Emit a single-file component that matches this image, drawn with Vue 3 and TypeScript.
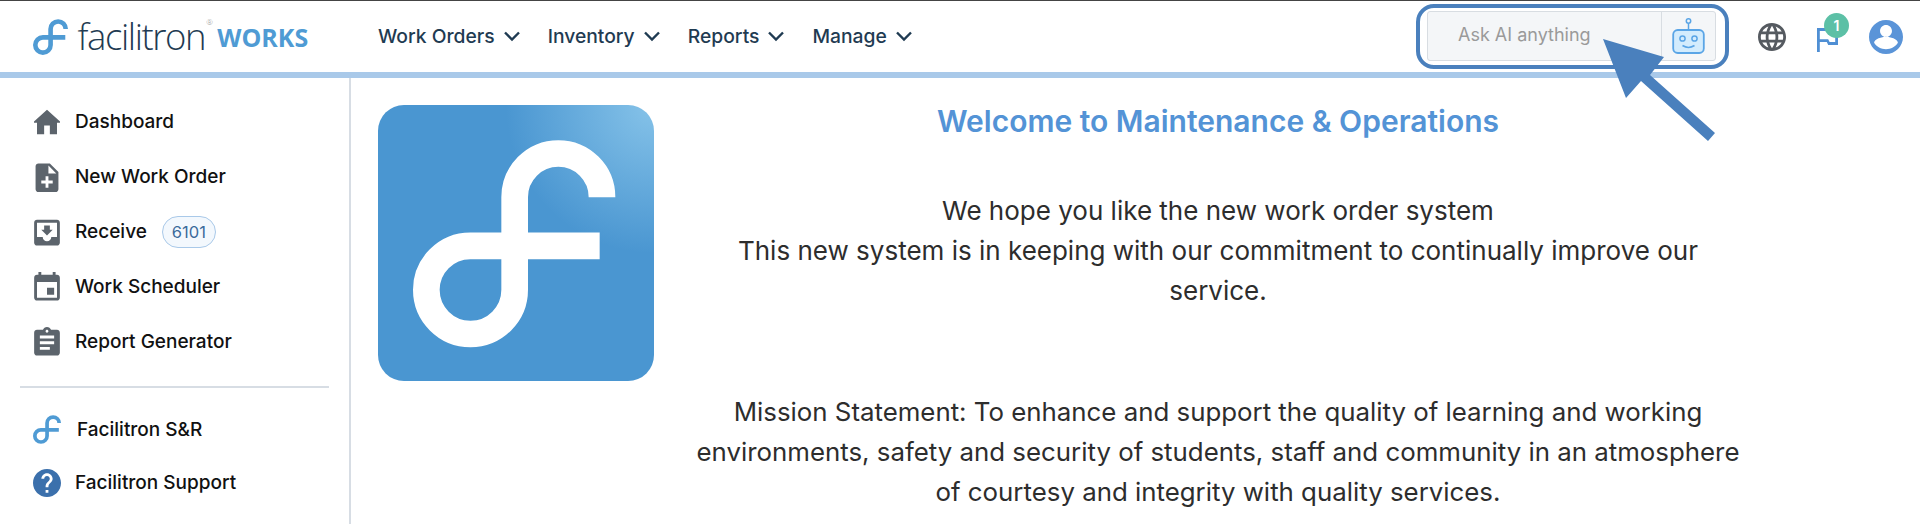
<script setup lang="ts">
const logoPath = 'M727 320A131 131 0 0 0 465 320V598A132 132 0 0 1 200 598A132 132 0 0 1 332 466H720'
const navItems: string[] = ['Work Orders', 'Inventory', 'Reports', 'Manage']
interface SideItem { label: string; path: string; badge?: string }
const sideItems: SideItem[] = [
  { label: 'Dashboard', path: 'M10 20v-6h4v6h5v-8h3L12 3 2 12h3v8z' },
  { label: 'New Work Order', path: 'M14 2H6c-1.1 0-2 .9-2 2v16c0 1.1.9 2 2 2h12c1.1 0 2-.9 2-2V8l-6-6zm2 14h-3v3h-2v-3H8v-2h3v-3h2v3h3v2zm-3-7V3.5L18.5 9H13z' },
  { label: 'Receive', badge: '6101', path: 'M19 3H5c-1.1 0-2 .9-2 2v14c0 1.1.9 2 2 2h14c1.1 0 2-.9 2-2V5c0-1.1-.9-2-2-2zm0 12h-4c0 1.66-1.34 3-3 3s-3-1.34-3-3H5V5h14v10zM16 10h-2V7h-4v3H8l4 4 4-4z' },
  { label: 'Work Scheduler', path: 'M17 12h-5v5h5v-5zM16 1v2H8V1H6v2H5c-1.11 0-1.99.9-1.99 2L3 19c0 1.1.89 2 2 2h14c1.1 0 2-.9 2-2V5c0-1.1-.9-2-2-2h-1V1h-2zm3 18H5V8h14v11z' },
  { label: 'Report Generator', path: 'M19 3h-4.18C14.4 1.84 13.3 1 12 1c-1.3 0-2.4.84-2.82 2H5c-1.1 0-2 .9-2 2v14c0 1.1.9 2 2 2h14c1.1 0 2-.9 2-2V5c0-1.1-.9-2-2-2zm-7 0c.55 0 1 .45 1 1s-.45 1-1 1-1-.45-1-1 .45-1 1-1zm2 14H7v-2h7v2zm3-4H7v-2h10v2zm0-4H7V7h10v2z' },
]
</script>

<template>
  <div class="page">
    <header class="topbar">
      <div class="brand">
        <svg class="brand-mark" viewBox="160 148 607 622"><path :d="logoPath" class="f-stroke" /></svg>
        <span class="brand-name">facilitron<sup class="reg">®</sup></span>
        <span class="brand-works">WORKS</span>
      </div>
      <nav class="nav">
        <a v-for="item in navItems" :key="item" class="nav-item">
          {{ item }}
          <svg class="chev" viewBox="0 0 18 12"><path d="M2 2.5l7 7 7-7" /></svg>
        </a>
      </nav>
      <div class="tools">
        <div class="ask-frame">
          <div class="ask">
            <span class="ask-text">Ask AI anything</span>
            <span class="ask-bot">
              <svg class="bot" viewBox="0 0 33 36">
                <circle cx="16.500" cy="3" r="2.200" class="bot-line" />
                <path d="M16.500 5.500V12" class="bot-line" />
                <rect x="1.200" y="12" width="30.600" height="23" rx="4.500" class="bot-body" />
                <circle cx="10.500" cy="20.500" r="2.600" class="bot-line" />
                <circle cx="22.500" cy="20.500" r="2.600" class="bot-line" />
                <path d="M10.500 27.500q6 3.800 12 0" class="bot-line" />
              </svg>
            </span>
          </div>
        </div>
        <svg class="globe" viewBox="2 2 20 20"><path d="M11.990 2C6.470 2 2 6.480 2 12s4.470 10 9.990 10C17.520 22 22 17.520 22 12S17.520 2 11.990 2zm6.930 6h-2.950c-.32-1.250-.78-2.450-1.380-3.560 1.840.63 3.370 1.910 4.330 3.560zM12 4.040c.83 1.200 1.480 2.530 1.910 3.960h-3.820c.43-1.430 1.080-2.760 1.910-3.960zM4.260 14C4.100 13.360 4 12.690 4 12s.1-1.360.26-2h3.380c-.08.66-.14 1.320-.14 2 0 .68.06 1.340.14 2H4.260zm.82 2h2.950c.32 1.250.78 2.450 1.380 3.560-1.840-.63-3.370-1.900-4.330-3.560zm2.950-8H5.080c.96-1.660 2.490-2.930 4.330-3.560C8.810 5.550 8.350 6.750 8.030 8zM12 19.960c-.83-1.200-1.480-2.530-1.910-3.960h3.820c-.43 1.430-1.080 2.760-1.910 3.960zM14.340 14H9.660c-.09-.66-.16-1.320-.16-2 0-.68.07-1.350.16-2h4.680c.09.65.16 1.320.16 2 0 .68-.07 1.340-.16 2zm.25 5.560c.6-1.110 1.060-2.310 1.380-3.560h2.950c-.96 1.650-2.490 2.930-4.330 3.560zM16.360 14c.08-.66.14-1.320.14-2 0-.68-.06-1.340-.14-2h3.380c.16.64.26 1.310.26 2s-.1 1.360-.26 2h-3.380z" /></svg>
        <span class="flag-wrap">
          <svg class="flag" viewBox="5 4 15 17"><path d="M14 6l-1-2H5v17h2v-7h5l1 2h7V6h-6zm4 8h-4l-1-2H7V6h5l1 2h5v6z" /></svg>
          <span class="flag-badge">1</span>
        </span>
        <svg class="user" viewBox="2 2 20 20"><path d="M12 2C6.480 2 2 6.480 2 12s4.480 10 10 10 10-4.480 10-10S17.520 2 12 2zm0 3c1.930 0 3.500 1.570 3.500 3.500S13.930 12 12 12s-3.500-1.570-3.500-3.500S10.070 5 12 5zm0 14.200c-2.920 0-5.490-1.500-7-3.770.03-2.320 4.670-3.600 7-3.600s6.970 1.280 7 3.600c-1.510 2.270-4.080 3.770-7 3.770z" /></svg>
      </div>
    </header>

    <div class="body">
      <aside class="side">
        <a v-for="item in sideItems" :key="item.label" class="side-item">
          <svg class="side-icon" viewBox="3 1 18 21"><path :d="item.path" /></svg>
          <span>{{ item.label }}</span>
          <span v-if="item.badge" class="count">{{ item.badge }}</span>
        </a>
        <hr class="rule" />
        <a class="side-item tight first">
          <svg class="side-f" viewBox="160 148 607 622"><path :d="logoPath" class="f-stroke" /></svg>
          <span>Facilitron S&amp;R</span>
        </a>
        <a class="side-item tight">
          <svg class="side-help" viewBox="2 2 20 20"><path d="M12 2C6.480 2 2 6.480 2 12s4.480 10 10 10 10-4.480 10-10S17.520 2 12 2zm1 17h-2v-2h2v2zm2.070-7.750l-.9.92C13.450 12.900 13 13.500 13 15h-2v-.5c0-1.100.45-2.100 1.170-2.830l1.240-1.260c.37-.36.59-.86.59-1.410 0-1.100-.9-2-2-2s-2 .9-2 2H8c0-2.210 1.790-4 4-4s4 1.790 4 4c0 .88-.36 1.680-.93 2.250z" /></svg>
          <span>Facilitron Support</span>
        </a>
      </aside>

      <main class="main">
        <div class="tile">
          <svg class="tile-mark" viewBox="55 45 828 825"><path :d="logoPath" class="tile-stroke" /></svg>
        </div>
        <section class="copy">
          <h1 class="title">Welcome to Maintenance &amp; Operations</h1>
          <p class="para">We hope you like the new work order system<br />This new system is in keeping with our commitment to continually improve our service.</p>
          <p class="para mission">Mission Statement: To enhance and support the quality of learning and working environments, safety and security of students, staff and community in an atmosphere of courtesy and integrity with quality services.</p>
        </section>
      </main>
    </div>

    <svg class="pointer" viewBox="0 0 130 110"><path d="M3 3L64 21L50 39L115 97L108 105L41 45L26 62z" /></svg>
  </div>
</template>

<style>
html, body { margin: 0; background: #fff; }
</style>

<style scoped>
.page {
  position: relative;
  width: 1920px;
  height: 524px;
  overflow: hidden;
  background: #fff;
  font-family: Inter, "Liberation Sans", sans-serif;
  box-sizing: border-box;
  border-top: 1px solid #444;
}
.topbar {
  display: flex;
  align-items: center;
  height: 71px;
  border-bottom: 6px solid #a9c9e9;
  box-sizing: content-box;
}
.brand { display: flex; align-items: center; width: 378px; padding-left: 33px; box-sizing: border-box; }
.brand-mark { width: 35px; height: 36px; margin-top: 1px; }
.f-stroke { fill: none; stroke: #4f9bd4; stroke-width: 80; }
.brand-name {
  margin-left: 9.500px;
  font: 300 36.500px/1 "Open Sans", sans-serif;
  letter-spacing: -1.400px;
  color: #1f3b52;
  position: relative;
}
.reg { position: absolute; top: 0; margin-left: 1px; font-size: 8px; line-height: 1; color: #999; letter-spacing: 0; }
.brand-works { margin-left: 12px; font: 700 25px/1 "Open Sans", sans-serif; color: #4f9bd4; margin-top: 2px; }
.nav { display: flex; gap: 27px; margin-top: -2px; }
.nav-item {
  display: flex;
  align-items: center;
  gap: 8px;
  font-size: 19.300px;
  font-weight: 500;
  color: #1f3b52;
}
.chev { width: 18px; height: 12px; }
.chev path { fill: none; stroke: #1f3b52; stroke-width: 2.400; }
.tools { display: flex; align-items: center; margin-left: auto; padding-right: 17px; }
.ask-frame {
  width: 313px;
  height: 65px;
  margin-top: -1px;
  box-sizing: border-box;
  border: 4px solid #4a80bd;
  border-radius: 18px;
  padding: 3px 9px 4px 7px;
  display: flex;
}
.ask {
  flex: 1;
  display: flex;
  background: #f4f6f8;
  border: 1.500px solid #d8dde2;
  border-radius: 3px;
}
.ask-text { flex: 1; display: flex; align-items: center; padding-left: 30px; padding-bottom: 2px; font-size: 18px; color: #9a9a9a; border-right: 1.500px solid #d8dde2; }
.ask-bot { width: 53px; display: flex; align-items: center; justify-content: center; }
.bot { width: 33px; height: 36px; }
.bot-line { fill: none; stroke: #5aa5e6; stroke-width: 1.500; }
.bot-body { fill: #d3ecfd; stroke: #5aa5e6; stroke-width: 1.800; }
.globe { width: 28px; height: 28px; margin-left: 29px; fill: #555a60; }
.flag-wrap { position: relative; display: flex; margin-left: 31px; }
.flag { width: 21px; height: 24px; fill: #4f8fd4; margin-top: 6px; }
.flag-badge {
  position: absolute;
  left: 7px;
  top: -9px;
  width: 25px;
  height: 25px;
  border-radius: 50%;
  background: #5cc0a6;
  color: #fff;
  font-size: 14px;
  font-weight: 600;
  display: flex;
  align-items: center;
  justify-content: center;
}
.user { width: 34px; height: 34px; margin-left: 31px; fill: #5a94d8; }
.body { display: flex; height: 447px; }
.side {
  width: 351px;
  flex: none;
  box-sizing: border-box;
  border-right: 2px solid #d7dde4;
  padding: 16px 20px 0;
}
.side-item {
  display: flex;
  align-items: center;
  height: 55px;
  font-size: 19px;
  font-weight: 500;
  color: #111;
}
.side-icon { width: 26px; height: 30px; margin-left: 14px; margin-right: 15px; fill: #5c646c; }
.count {
  margin-left: 15px;
  padding: 0 9px;
  height: 30px;
  border: 1.500px solid #a9c9e9;
  background: #f3f8fd;
  border-radius: 16px;
  font-size: 16.500px;
  font-weight: 400;
  color: #3c6b9c;
  display: flex;
  align-items: center;
}
.rule { border: none; border-top: 2px solid #d7dde4; margin: 17px 0 15px; width: 309px; }
.tight { height: 53px; }
.first { margin-bottom: 0; }
.side-f { width: 28px; height: 29px; margin-left: 13px; margin-right: 16px; }
.side-help { width: 28px; height: 28px; margin-left: 13px; margin-right: 14px; fill: #3b70ac; }
.main { flex: 1; display: flex; padding: 27px 0 0 27px; align-items: flex-start; }
.tile {
  width: 276px;
  height: 276px;
  flex: none;
  border-radius: 26px;
  overflow: hidden;
  background:
    radial-gradient(circle at 100% 0%, #86c3e9 0%, rgba(134,195,233,0) 38%),
    #4a96d1;
}
.tile-mark { display: block; width: 100%; height: 100%; }
.tile-stroke { fill: none; stroke: #fff; stroke-width: 80; }
.copy { width: 1050px; margin-left: 39px; text-align: center; }
.title { margin: 0; padding-top: 0; font-size: 30px; font-weight: 600; line-height: 33px; color: #5393d6; }
.para { margin: 53px 0 0; font-size: 26px; line-height: 40px; color: #2d2d2d; }
.mission { margin-top: 81px; font-size: 25.840px; }
.pointer { position: absolute; left: 1600px; top: 35px; width: 130px; height: 110px; }
.pointer path { fill: #4a80bd; }
</style>
